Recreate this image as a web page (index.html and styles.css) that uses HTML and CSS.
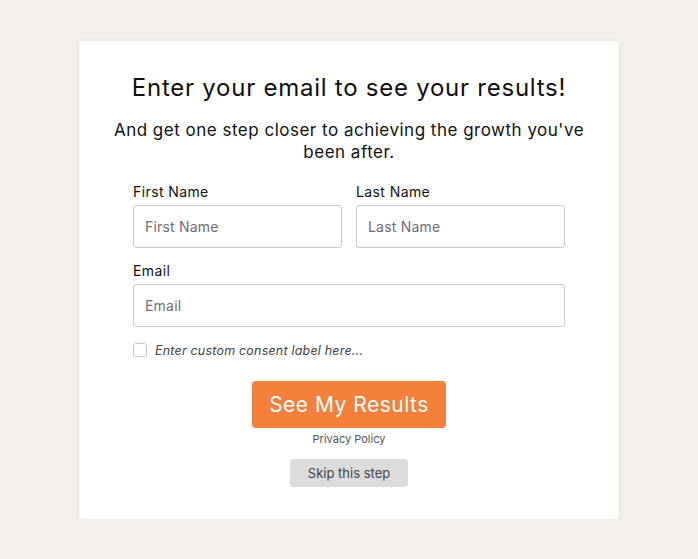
FILE: index.html
```html
<!DOCTYPE html>
<html>
<head>
<meta charset="utf-8">
<link rel="stylesheet" href="styles.css">
</head>
<body>
<div class="page">
  <div class="card">
    <h1 class="title">Enter your email to see your results!</h1>
    <p class="subtitle">And get one step closer to achieving the growth you've been after.</p>
    <form class="form">
      <div class="row">
        <div class="field">
          <label class="label">First Name</label>
          <input class="input" type="text" placeholder="First Name">
        </div>
        <div class="field">
          <label class="label">Last Name</label>
          <input class="input" type="text" placeholder="Last Name">
        </div>
      </div>
      <div class="field">
        <label class="label">Email</label>
        <input class="input" type="text" placeholder="Email">
      </div>
      <label class="consent">
        <span class="checkbox"></span>
        <span class="consent-text">Enter custom consent label here...</span>
      </label>
      <div class="actions">
        <button class="submit" type="button">See My Results</button>
        <a class="privacy">Privacy Policy</a>
        <button class="skip" type="button">Skip this step</button>
      </div>
    </form>
  </div>
</div>
</body>
</html>
```
FILE: styles.css
```css
* { box-sizing: border-box; }
html, body { margin: 0; padding: 0; }
body {
  background: #f4f1ec;
  font-family: "Inter", "Noto Sans", sans-serif;
  color: #111;
}
.page {
  display: flex;
  justify-content: center;
  padding-top: 41px;
}
.card {
  width: 540px;
  height: 478px;
  background: #fff;
  border-radius: 4px;
  box-shadow: 0 1px 4px rgba(0,0,0,0.12);
  padding-top: 31px;
  display: flex;
  flex-direction: column;
  align-items: center;
}
.title {
  margin: 0;
  font-size: 24px;
  font-weight: 400;
  line-height: 32px;
  letter-spacing: 0.75px;
  color: #111;
}
.subtitle {
  margin: 15px 0 0;
  width: 484px;
  text-align: center;
  font-size: 17px;
  line-height: 22px;
  letter-spacing: 0.5px;
  color: #111;
}
.form {
  width: 432px;
  margin-top: 21px;
  display: flex;
  flex-direction: column;
}
.row {
  display: flex;
  gap: 14px;
}
.row .field { flex: 1 1 0; min-width: 0; }
.field {
  display: flex;
  flex-direction: column;
  margin-bottom: 15px;
}
.label {
  font-size: 14px;
  line-height: 16px;
  letter-spacing: 0.4px;
  margin-bottom: 5px;
  color: #111;
}
.input {
  width: 100%;
  min-width: 0;
  height: 43px;
  border: 1px solid #c9c9c9;
  border-radius: 3px;
  padding: 0 11px;
  font-family: inherit;
  font-size: 14px;
  letter-spacing: 0.2px;
  color: #333;
  background: #fff;
}
.input::placeholder { color: #6f6f6f; }
.consent {
  display: flex;
  align-items: center;
  gap: 8px;
  margin-top: 0;
  height: 16px;
}
.checkbox {
  width: 14px;
  height: 14px;
  border: 1px solid #c9c9c9;
  border-radius: 3px;
  background: #fff;
}
.consent-text {
  font-size: 12.5px;
  font-style: italic;
  letter-spacing: 0.2px;
  color: #444;
}
.actions {
  display: flex;
  flex-direction: column;
  align-items: center;
  margin-top: 23px;
}
.submit {
  width: 194px;
  height: 47px;
  border: none;
  border-radius: 4px;
  background: #f5803b;
  color: #fff;
  font-family: inherit;
  font-size: 21px;
  letter-spacing: 0.5px;
  padding: 0;
}
.privacy {
  margin-top: 4px;
  font-size: 11px;
  line-height: 14px;
  color: #555;
}
.skip {
  margin-top: 13px;
  width: 118px;
  height: 28px;
  border: none;
  border-radius: 4px;
  background: #dcdcdc;
  color: #444;
  font-family: inherit;
  font-size: 13px;
  padding: 0;
}
```
